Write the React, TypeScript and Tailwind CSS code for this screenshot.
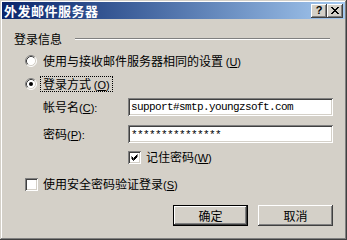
import React from "react";

const raised =
  "shadow-[inset_-1px_-1px_#404040,inset_1px_1px_#ffffff,inset_-2px_-2px_#808080,inset_2px_2px_#d4d0c8]";
const sunken =
  "shadow-[inset_1px_1px_#808080,inset_-1px_-1px_#ffffff,inset_2px_2px_#404040,inset_-2px_-2px_#d4d0c8]";

function Radio({ checked }: { checked?: boolean }) {
  return (
    <svg width="12" height="12" viewBox="0 0 12 12" className="shrink-0">
      <circle cx="6" cy="6" r="5" fill="#ffffff" />
      <path d="M2.11 9.89 A5.5 5.5 0 0 1 9.89 2.11" stroke="#808080" strokeWidth="1" fill="none" />
      <path d="M9.89 2.11 A5.5 5.5 0 0 1 2.11 9.89" stroke="#ffffff" strokeWidth="1" fill="none" />
      <path d="M2.82 9.18 A4.5 4.5 0 0 1 9.18 2.82" stroke="#404040" strokeWidth="1" fill="none" />
      <path d="M9.18 2.82 A4.5 4.5 0 0 1 2.82 9.18" stroke="#d4d0c8" strokeWidth="1" fill="none" />
      {checked && <circle cx="6" cy="6" r="2" fill="#000000" />}
    </svg>
  );
}

function Check({ checked }: { checked?: boolean }) {
  return (
    <div className={`w-[13px] h-[13px] shrink-0 bg-white flex items-center justify-center ${sunken}`}>
      {checked && (
        <svg width="7" height="7" viewBox="0 0 7 7">
          <path d="M0.5 2.5 L2.5 4.5 L6.5 0.5 M0.5 3.5 L2.5 5.5 L6.5 1.5 M0.5 4.5 L2.5 6.5 L6.5 2.5" stroke="#000" strokeWidth="1" fill="none" />
        </svg>
      )}
    </div>
  );
}

function Mn({ k, post }: { k: string; post?: string }) {
  return (
    <span className="font-['Liberation_Sans',sans-serif] text-[11px]">
      (<span className="underline">{k}</span>){post}
    </span>
  );
}

export default function App() {
  return (
    <div
      className={`w-[347px] h-[240px] bg-[#d4d0c8] p-[2px] flex flex-col text-black font-['Noto_Sans_CJK_SC',sans-serif] text-[12px] leading-[14px] shadow-[inset_-1px_-1px_#404040,inset_1px_1px_#d4d0c8,inset_-2px_-2px_#808080,inset_2px_2px_#ffffff]`}
    >
      {/* Title bar */}
      <div className="h-[17px] flex items-center justify-between bg-linear-to-r from-[#0a246a] to-[#a6caf0] pl-[2px] pr-[2px]">
        <span className="text-white font-bold text-[13px] leading-[15px] tracking-[0.5px]">外发邮件服务器</span>
        <div className="flex">
          <div className={`w-[16px] h-[14px] bg-[#d4d0c8] flex items-center justify-center ${raised}`}>
            <span className="font-['Liberation_Sans',sans-serif] font-bold text-[11px] leading-[11px]">?</span>
          </div>
          <div className={`w-[16px] h-[14px] bg-[#d4d0c8] flex items-center justify-center ${raised}`}>
            <svg width="8" height="7" viewBox="0 0 8 7">
              <path d="M0 0 L7 7 M1 0 L8 7 M7 0 L0 7 M8 0 L1 7" stroke="#000" strokeWidth="1" fill="none" />
            </svg>
          </div>
        </div>
      </div>

      {/* Group header */}
      <div className="h-[14px] mt-[13px] flex items-center pl-[12px] pr-[15px]">
        <span>登录信息</span>
        <div className="flex-1 ml-[13px] h-[2px] border-t border-t-[#808080] border-b border-b-white" />
      </div>

      {/* Radio 1 */}
      <div className="h-[14px] mt-[8px] flex items-center pl-[23px]">
        <Radio />
        <span className="ml-[6px]">
          使用与接收邮件服务器相同的设置 <Mn k="U" />
        </span>
      </div>

      {/* Radio 2 */}
      <div className="h-[16px] mt-[8px] flex items-center pl-[23px]">
        <Radio checked />
        <span className="ml-[3px] h-[16px] px-[2px] block leading-[14px] border border-dotted border-black whitespace-pre">
          登录方式 <Mn k="O" />
        </span>
      </div>

      {/* Account */}
      <div className="h-[18px] mt-[6px] flex items-center pl-[41px]">
        <span className="w-[85px]">
          帐号名<Mn k="C" post=":" />
        </span>
        <div className={`w-[205px] h-[18px] bg-white flex items-center pl-[3px] ${sunken}`}>
          <span className="font-['Liberation_Mono',monospace] text-[11px] tracking-[-0.6px] leading-[12px]">support#smtp.youngzsoft.com</span>
        </div>
      </div>

      {/* Password */}
      <div className="h-[18px] mt-[9px] flex items-center pl-[41px]">
        <span className="w-[85px]">
          密码<Mn k="P" post=":" />
        </span>
        <div className={`w-[205px] h-[18px] bg-white flex items-center pl-[3px] ${sunken}`}>
          <span className="font-['Liberation_Mono',monospace] text-[11px] tracking-[-0.6px] leading-[12px] mt-[2px]">***************</span>
        </div>
      </div>

      {/* Remember */}
      <div className="h-[13px] mt-[8px] flex items-center pl-[126px]">
        <Check checked />
        <span className="ml-[5px]">
          记住密码<Mn k="W" />
        </span>
      </div>

      {/* SPA */}
      <div className="h-[13px] mt-[14px] flex items-center pl-[23px]">
        <Check />
        <span className="ml-[5px]">
          使用安全密码验证登录<Mn k="S" />
        </span>
      </div>

      {/* Buttons */}
      <div className="mt-[14px] flex justify-end pr-[12px] gap-[10px]">
        <div className="w-[75px] h-[21px] border border-black">
          <div className={`w-full h-full flex items-center justify-center ${raised}`}>确定</div>
        </div>
        <div className={`w-[75px] h-[21px] flex items-center justify-center ${raised}`}>取消</div>
      </div>
    </div>
  );
}
